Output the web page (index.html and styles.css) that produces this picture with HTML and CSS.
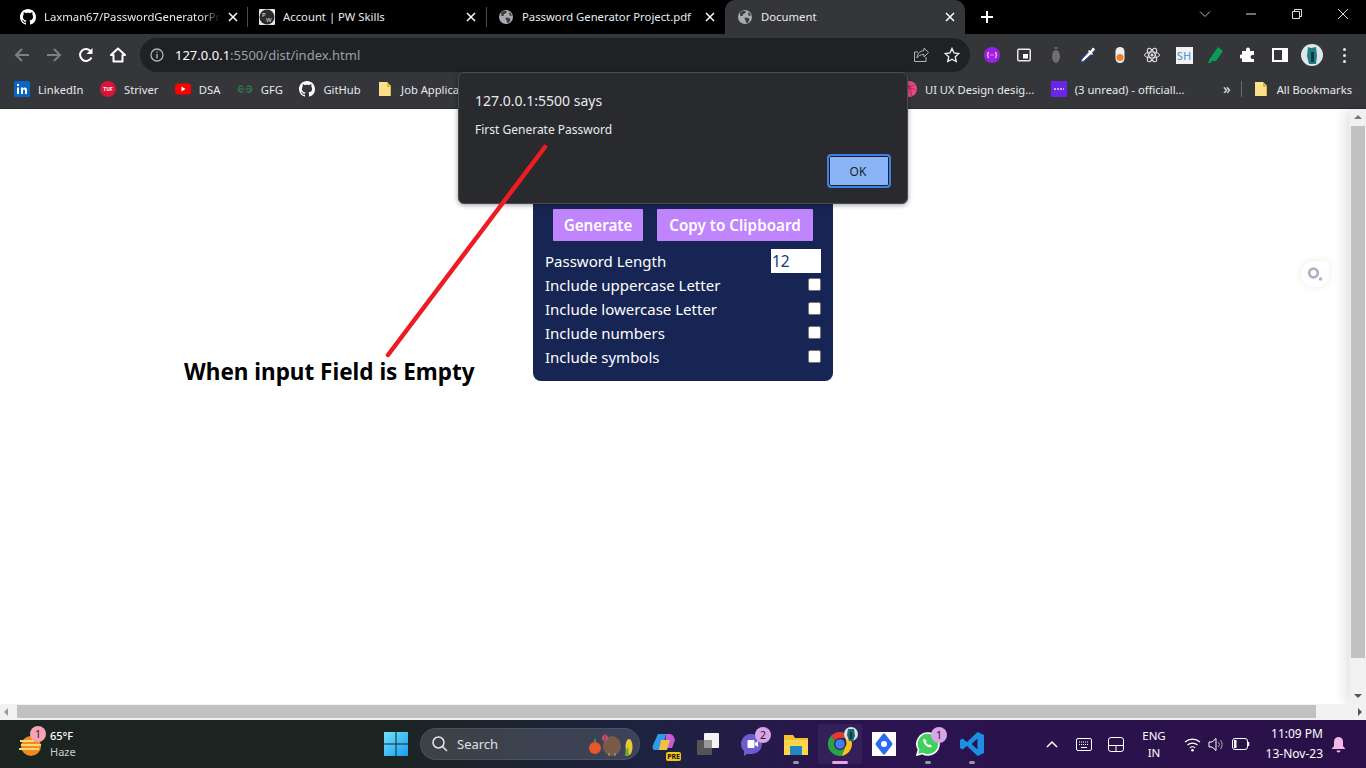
FILE: index.html
```html
<!DOCTYPE html>
<html lang="en">
<head>
    <meta charset="UTF-8">
    <meta name="viewport" content="width=device-width, initial-scale=1.0">
    <title>Document</title>
    <link rel="stylesheet" href="styles.css">
</head>
<body>
    <svg class="defs" width="0" height="0">
        <symbol id="gh" viewBox="0 0 16 16"><path fill="#fff" d="M8 0C3.58 0 0 3.58 0 8c0 3.54 2.29 6.53 5.47 7.59.4.07.55-.17.55-.38 0-.19-.01-.82-.01-1.49-2.01.37-2.53-.49-2.69-.94-.09-.23-.48-.94-.82-1.13-.28-.15-.68-.52-.01-.53.63-.01 1.08.58 1.23.82.72 1.21 1.87.87 2.33.66.07-.52.28-.87.51-1.07-1.78-.2-3.64-.89-3.64-3.95 0-.87.31-1.59.82-2.15-.08-.2-.36-1.02.08-2.12 0 0 .67-.21 2.2.82.64-.18 1.32-.27 2-.27.68 0 1.36.09 2 .27 1.53-1.04 2.2-.82 2.2-.82.44 1.1.16 1.92.08 2.12.51.56.82 1.27.82 2.15 0 3.07-1.87 3.75-3.65 3.95.29.25.54.73.54 1.48 0 1.07-.01 1.93-.01 2.2 0 .21.15.46.55.38A8.013 8.013 0 0016 8c0-4.42-3.58-8-8-8z"/></symbol>
        <symbol id="globe" viewBox="0 0 16 16"><circle cx="8" cy="8" r="7" fill="#a8abb0"/><path fill="#3a3b3f" d="M3 3.5l3-1.8 3 .6-1 2-2 .8-.4 2L3.400 7zM8 8.500l3.500.5 1 2-2 3-1.500-.5-.5-2.500-1-1zM11 3l2 1.500.8 2.500-2.300-.5z"/></symbol>
        <symbol id="folder" viewBox="0 0 12 16"><path fill="#fbe08c" d="M0 1h8l4 4v10H0z"/><path fill="#e3b341" d="M8 1l4 4v10h-1V6H8z"/></symbol>
        <symbol id="close" viewBox="0 0 10 10"><path d="M1 1l8 8M9 1l-8 8" stroke="#fff" stroke-width="1.500" fill="none"/></symbol>
    </svg>

    <div class="tabstrip">
        <div class="tab">
            <svg class="ico16"><use href="#gh"/></svg>
            <span class="tab-title fade">Laxman67/PasswordGeneratorPr</span>
            <svg class="tab-x"><use href="#close"/></svg>
        </div>
        <div class="tab sep">
            <svg class="ico16" viewBox="0 0 16 16"><rect width="16" height="16" rx="1" fill="#e8e8e8"/><circle cx="8" cy="8" r="7.500" fill="#2a2a2a"/><text x="3" y="8" class="fav-txt" fill="#e8e8e8">P</text><text x="7" y="13" class="fav-txt" fill="#e8e8e8">W</text></svg>
            <span class="tab-title">Account | PW Skills</span>
            <svg class="tab-x"><use href="#close"/></svg>
        </div>
        <div class="tab sep">
            <svg class="ico16"><use href="#globe"/></svg>
            <span class="tab-title">Password Generator Project.pdf</span>
            <svg class="tab-x"><use href="#close"/></svg>
        </div>
        <div class="tab active">
            <svg class="ico16"><use href="#globe"/></svg>
            <span class="tab-title">Document</span>
            <svg class="tab-x"><use href="#close"/></svg>
        </div>
        <svg class="newtab" viewBox="0 0 14 14"><path d="M7 1v12M1 7h12" stroke="#fff" stroke-width="2"/></svg>
        <div class="winctl">
            <svg viewBox="0 0 12 12"><path d="M1 3.500l5 5 5-5" stroke="#bbb" fill="none"/></svg>
            <svg viewBox="0 0 12 12"><path d="M1 6h10" stroke="#ddd"/></svg>
            <svg viewBox="0 0 12 12"><path d="M1.500 3.500h7v7h-7zM3.500 3.500v-2h7v7h-2" stroke="#ddd" fill="none"/></svg>
            <svg viewBox="0 0 12 12"><path d="M1 1l10 10M11 1L1 11" stroke="#ddd" fill="none"/></svg>
        </div>
    </div>

    <div class="toolbar">
        <div class="slot"><svg class="ico16" viewBox="0 0 16 16"><path d="M15 8H2M8 2L2 8l6 6" stroke="#7d7f83" stroke-width="2" fill="none"/></svg></div>
        <div class="slot"><svg class="ico16" viewBox="0 0 16 16"><path d="M1 8h13M8 2l6 6-6 6" stroke="#7d7f83" stroke-width="2" fill="none"/></svg></div>
        <div class="slot"><svg class="ico16" viewBox="0 0 16 16"><path d="M13.500 10.500A6 6 0 1 1 13 4.500" stroke="#fff" stroke-width="2" fill="none"/><path d="M14.500 1v6h-6z" fill="#fff"/></svg></div>
        <div class="slot"><svg class="ico16" viewBox="0 0 16 16"><path d="M8 1.500L1 8h2.500v6.500h9V8H15z" stroke="#fff" stroke-width="2" fill="none" stroke-linejoin="round"/></svg></div>
        <div class="omnibox">
            <svg class="info" viewBox="0 0 14 14"><circle cx="7" cy="7" r="6" stroke="#b0b3b8" stroke-width="1.300" fill="none"/><path d="M7 6v4.500M7 3.500v1.300" stroke="#b0b3b8" stroke-width="1.400"/></svg>
            <span class="url"><b>127.0.0.1</b>:5500/dist/index.html</span>
            <svg class="omni-ico" viewBox="0 0 16 16"><path d="M11 1l4.500 4.500L11 10V7.500C7 7.500 5 9 4 11c0-4 2.500-7 7-7.500zM13 10v4.500H1.500V5H5" stroke="#b0b3b8" fill="none"/></svg>
            <svg class="omni-ico" viewBox="0 0 16 16"><path d="M8 1.500l2 4.400 4.800.6-3.500 3.300.9 4.700L8 12.200l-4.200 2.300.9-4.700L1.200 6.500 6 5.900z" stroke="#e8eaed" stroke-width="1.400" fill="none"/></svg>
        </div>
        <div class="extensions">
            <div class="slot"><svg class="ico16" viewBox="0 0 16 16"><circle cx="8" cy="8" r="8" fill="#a020e0"/><path d="M4.500 5c-1 2-1 4 0 6M11.500 5c1 2 1 4 0 6M6.500 8h1M8.500 8h1" stroke="#fff" fill="none"/></svg></div>
            <div class="slot"><svg class="ico16" viewBox="0 0 16 16"><rect x="1" y="1.500" width="14" height="13" rx="2" fill="#e8e8e8"/><rect x="2.500" y="3" width="11" height="10" fill="#333"/><rect x="7" y="7" width="5" height="4.500" fill="#fff"/></svg></div>
            <div class="slot"><svg class="ico16" viewBox="0 0 16 16"><path d="M6.500 0h3v2h-3z" fill="#666"/><ellipse cx="8" cy="9.500" rx="4" ry="6.500" fill="#6f6f6f"/></svg></div>
            <div class="slot"><svg class="ico16" viewBox="0 0 16 16"><path d="M9.500 4L2 12l-1 3 3-1 8-7.500z" fill="#fff" stroke="#3355cc"/><path d="M9 3l1.500 1L12.500.8c1-.7 3 1.300 2.200 2.300L12 5.500 13 7l-1 1-4-4z" fill="#fff"/></svg></div>
            <div class="slot"><svg class="ico16" viewBox="0 0 16 16"><rect x="3.500" y="0" width="9" height="16" rx="4.500" fill="#eee"/><circle cx="8" cy="10.500" r="3.500" fill="#f08030"/></svg></div>
            <div class="slot"><svg class="ico16" viewBox="0 0 16 16"><g stroke="#ddd" fill="none"><ellipse cx="8" cy="8" rx="7.500" ry="3"/><ellipse cx="8" cy="8" rx="7.500" ry="3" transform="rotate(60 8 8)"/><ellipse cx="8" cy="8" rx="7.500" ry="3" transform="rotate(120 8 8)"/></g><circle cx="8" cy="8" r="1.500" fill="#ddd"/></svg></div>
            <div class="slot"><span class="sh">SH</span></div>
            <div class="slot"><svg class="ico16" viewBox="0 0 16 16"><path d="M10 0l5 4-7 10H3.500L3 16H0l2-4.500z" fill="#0a9d58"/></svg></div>
            <div class="slot"><svg class="ico16" viewBox="0 0 16 16"><path d="M6 2.500a2 2 0 0 1 4 0V4h4v4h-1.500a2 2 0 0 0 0 4H14v3H2v-3.500h-.5a2 2 0 0 1 0-4H2V4h4z" fill="#fff"/></svg></div>
            <div class="slot"><svg class="ico16" viewBox="0 0 16 16"><path d="M1 2h14v12H1z" stroke="#fff" stroke-width="2" fill="none"/><path d="M10 2h5v12h-5z" fill="#fff"/></svg></div>
            <div class="slot"><svg class="avatar" viewBox="0 0 22 22"><circle cx="11" cy="11" r="11" fill="#dfe7ea"/><path d="M7 3l3 1 5-1 1 9-1 8H8l-2-8z" fill="#1f7f86"/><path d="M10 8h3v10h-3z" fill="#16363b"/></svg></div>
            <div class="slot"><span class="dots"><i></i><i></i><i></i></span></div>
        </div>
    </div>

    <div class="bookmarks">
        <div class="bm">
            <svg class="ico16" viewBox="0 0 16 16"><rect width="16" height="16" rx="1.500" fill="#0a66c2"/><path d="M3 6.500h2V13H3zM3 3h2v2H3zM7 6.500h2v1c.8-1.500 4-1.800 4 1.500v4h-2V9.500c0-1.500-2-1.500-2 0V13H7z" fill="#fff"/></svg>
            <span>LinkedIn</span>
        </div>
        <div class="bm">
            <svg class="ico16" viewBox="0 0 16 16"><circle cx="8" cy="8" r="8" fill="#d8143a"/><text x="8" y="10" class="tuf" fill="#fff" text-anchor="middle">TUF</text></svg>
            <span>Striver</span>
        </div>
        <div class="bm">
            <svg class="ico16" viewBox="0 0 16 16"><rect y="2.500" width="16" height="11" rx="3" fill="#f00"/><path d="M6.500 5.500l4 2.500-4 2.500z" fill="#fff"/></svg>
            <span>DSA</span>
        </div>
        <div class="bm">
            <svg class="ico16" viewBox="0 0 16 16"><path d="M7.500 8H1.200a3 3 0 0 0 5.300 2M1.500 6.500a3 3 0 0 1 4.500-.8M8.500 8h6.300a3 3 0 0 1-5.300 2M14.500 6.500a3 3 0 0 0-4.500-.8" stroke="#2f8d46" stroke-width="1.100" fill="none"/></svg>
            <span>GFG</span>
        </div>
        <div class="bm">
            <svg class="ico16"><use href="#gh"/></svg>
            <span>GitHub</span>
        </div>
        <div class="bm">
            <svg class="ico16"><use href="#folder"/></svg>
            <span>Job Applications</span>
        </div>
        <div class="bm-gap"></div>
        <div class="bm">
            <svg class="ico16" viewBox="0 0 16 16"><circle cx="8" cy="8" r="8" fill="#ea4c89"/><path d="M2 5c4 1 8 1 12-1M5 1c3 4 5 9 6 14M1 9c4-2 9-3 14 0" stroke="#b8245e" fill="none"/></svg>
            <span>UI UX Design desig...</span>
        </div>
        <div class="bm">
            <svg class="ico16" viewBox="0 0 16 16"><rect width="16" height="16" rx="1" fill="#6a25e8"/><path d="M3 8h10" stroke="#ddd" stroke-width="1.500" stroke-dasharray="2 1"/></svg>
            <span>(3 unread) - officiall...</span>
        </div>
        <span class="bm-more">»</span>
        <span class="bm-sep"></span>
        <div class="bm">
            <svg class="ico16"><use href="#folder"/></svg>
            <span>All Bookmarks</span>
        </div>
    </div>

    <div class="page">
        <div class="card">
            <div class="card-actions">
                <button class="btn btn-gen">Generate</button>
                <button class="btn btn-copy">Copy to Clipboard</button>
            </div>
            <div class="opt"><span>Password Length</span><span class="len">12</span></div>
            <div class="opt"><span>Include uppercase Letter</span><span class="check"></span></div>
            <div class="opt"><span>Include lowercase Letter</span><span class="check"></span></div>
            <div class="opt"><span>Include numbers</span><span class="check"></span></div>
            <div class="opt"><span>Include symbols</span><span class="check"></span></div>
        </div>

        <p class="note">When input Field is Empty</p>
        <div class="widget"><svg viewBox="0 0 16 16" width="16" height="16"><circle cx="6.500" cy="7" r="4.300" stroke="#aab4c6" stroke-width="2.800" fill="none"/><circle cx="13.500" cy="13" r="1.800" fill="#aab4c6"/></svg></div>

        <div class="vbar">
            <div class="arrow up"></div>
            <div class="vthumb"></div>
            <div class="arrow down"></div>
        </div>
        <div class="hbar">
            <div class="arrow left"></div>
            <div class="hthumb"></div>
            <div class="arrow right"></div>
        </div>
    </div>

    <div class="dialog">
        <div class="dialog-title">127.0.0.1:5500 says</div>
        <div class="dialog-msg">First Generate Password</div>
        <div class="dialog-foot"><button class="ok">OK</button></div>
    </div>
    <svg class="pen" width="1366" height="768"><path d="M545 147L388 355" stroke="#ed1c24" stroke-width="4.500" stroke-linecap="round"/></svg>

    <div class="taskbar">
        <div class="weather">
            <svg class="sun" viewBox="0 0 24 24"><circle cx="13" cy="14" r="10" fill="#f08a1d"/><path d="M2 9h14M3 13h20M1 17h20" stroke="#f6d77a" stroke-width="2"/></svg>
            <span class="badge pink">1</span>
            <div class="weather-txt"><b>65°F</b><span>Haze</span></div>
        </div>
        <div class="tb-slot">
            <svg class="ico24" viewBox="0 0 24 24"><path d="M0 0h11.500v11.500H0zM12.500 0H24v11.500H12.500zM0 12.500h11.500V24H0zM12.500 12.500H24V24H12.500z" fill="url(#winfill)"/><defs><linearGradient id="winfill" x1="0" y1="0" x2="1" y2="1"><stop offset="0" stop-color="#6fe3fb"/><stop offset="1" stop-color="#1a9af0"/></linearGradient></defs></svg>
        </div>
        <div class="search">
            <svg width="18" height="18" viewBox="0 0 18 18"><circle cx="7.500" cy="7.500" r="5.500" stroke="#e8e8e8" stroke-width="1.500" fill="none"/><path d="M11.500 11.500L16 16" stroke="#e8e8e8" stroke-width="1.500"/></svg>
            <span>Search</span>
            <svg class="turkey" width="46" height="28" viewBox="0 0 46 28"><circle cx="6" cy="18" r="6" fill="#e8562a"/><path d="M6 12V9" stroke="#4c8a2c" stroke-width="2"/><ellipse cx="23" cy="16" rx="9" ry="10" fill="#7a5a44"/><circle cx="16" cy="8" r="3" fill="#c8506a"/><path d="M16 4v10" stroke="#a04a5a" stroke-width="2"/><path d="M20 26v-3M26 26v-3" stroke="#c99" stroke-width="1"/><ellipse cx="40" cy="17" rx="3.500" ry="8" fill="#e9c832"/><path d="M36 26c0-5 1-7 3-9l1 9z" fill="#6aa832"/></svg>
        </div>
        <div class="tb-slot">
            <svg class="ico24" viewBox="0 0 24 24"><path d="M6 2h8l-4 16H3C1 18 0 16 1 13z" fill="#2f9ae8"/><path d="M14 2h4c2 0 4 2 5 6l-3 8h-7z" fill="#c45cd8"/><path d="M9 8h9l-3 10H7z" fill="#f0c040"/></svg>
            <span class="pre">PRE</span>
        </div>
        <div class="tb-slot">
            <svg class="ico24" viewBox="0 0 24 24"><rect x="1" y="8" width="15" height="15" rx="1" fill="#555"/><rect x="8" y="1" width="15" height="15" rx="1" fill="#f4f4f4"/><rect x="8" y="8" width="8" height="8" fill="#999"/></svg>
        </div>
        <div class="tb-slot">
            <svg class="ico24" viewBox="0 0 24 24"><path d="M12 2a10 10 0 0 1 0 20H7l-3 2v-5A10 10 0 0 1 12 2z" fill="#6d5ccf"/><rect x="7.500" y="8" width="7" height="8" rx="1" fill="#fff"/><path d="M15 11l3-2v6l-3-2z" fill="#fff"/></svg>
            <span class="badge lilac">2</span>
        </div>
        <div class="tb-slot dot">
            <svg class="ico24" viewBox="0 0 24 24"><path d="M0 3h9l2 3h13v17H0z" fill="#f4c22e"/><path d="M0 8h24v15H0z" fill="#fbd54a"/><rect x="6" y="14" width="12" height="9" rx="1" fill="#1f86c8"/></svg>
        </div>
        <div class="tb-slot current">
            <svg class="ico24" viewBox="0 0 24 24"><path d="M12 0a12 12 0 0 1 10.400 6H12a6 6 0 0 0-5.200 3L3.300 3.600A12 12 0 0 1 12 0z" fill="#e23c30"/><path d="M22.400 6a12 12 0 0 1-9 17.900l3.800-8.900A6 6 0 0 0 18 9c0-1-.2-2.100-.8-3z" fill="#fbc116"/><path d="M3.300 3.600A12 12 0 0 0 13.400 23.900l3.800-8.900a6 6 0 0 1-10.400-6z" fill="#2aa24a"/><circle cx="12" cy="12" r="4.800" fill="#3f7fe8"/></svg>
            <svg class="chrome-avatar" viewBox="0 0 14 14"><circle cx="7" cy="7" r="7" fill="#d8e4e6"/><path d="M4 2h6l1 7-2 5H5L3 8z" fill="#176c74"/><path d="M6 5h2v7H6z" fill="#143033"/></svg>
        </div>
        <div class="tb-slot">
            <svg class="ico24" viewBox="0 0 24 24"><rect width="24" height="24" fill="#fff"/><path d="M12 3l7 9-7 9-7-9z" fill="#2a6df0" stroke="#2a6df0" stroke-width="3" stroke-linejoin="round"/><circle cx="12" cy="12" r="3" fill="#fff"/></svg>
        </div>
        <div class="tb-slot dot">
            <svg class="ico24" viewBox="0 0 24 24"><path d="M12 1a11 11 0 0 1 0 22c-2 0-4-.5-5.600-1.500L1 23l1.500-5.300A11 11 0 0 1 12 1z" fill="#3fd05e" stroke="#fff" stroke-width="1.600"/><path d="M8 6.500c-1.500 1.500-1 4 1.500 6.500s5 3 6.500 1.500l-2-2.200-1.500.7c-1-.5-2-1.500-2.500-2.500l.7-1.500z" fill="#fff"/></svg>
            <span class="badge lilac">1</span>
        </div>
        <div class="tb-slot dot">
            <svg class="ico24" viewBox="0 0 24 24"><path d="M17.500 0L24 3v18l-6.500 3L7 14l-4.500 3.500L0 16V8l2.500-1.500L7 10zM17.500 6.500L11.500 12l6 5.500z" fill="#1a8fe3"/></svg>
        </div>

        <div class="tray">
            <div class="tray-slot"><svg width="12" height="8" viewBox="0 0 12 8"><path d="M1 7l5-5 5 5" stroke="#fff" stroke-width="1.500" fill="none"/></svg></div>
            <div class="tray-slot"><svg width="16" height="13" viewBox="0 0 16 13"><rect x=".5" y=".5" width="15" height="12" rx="1.500" stroke="#fff" fill="none"/><path d="M3 4h10M3 6.500h10" stroke="#fff" stroke-dasharray="1 1"/><path d="M5 9.500h6" stroke="#fff"/></svg></div>
            <div class="tray-slot"><svg width="16" height="15" viewBox="0 0 16 15"><rect x=".5" y=".5" width="15" height="14" rx="2.500" stroke="#fff" fill="none"/><path d="M.5 8.500h15M8 8.500v6" stroke="#fff"/></svg></div>
            <div class="lang"><span>ENG</span><span>IN</span></div>
            <svg class="net" width="17" height="15" viewBox="0 0 17 15"><path d="M1 5a11 11 0 0 1 15 0M3.500 8a7.500 7.500 0 0 1 10 0M6 10.800a3.500 3.500 0 0 1 5 0" stroke="#fff" stroke-width="1.200" fill="none"/><circle cx="8.500" cy="13.300" r="1.300" fill="#fff"/></svg>
            <svg class="vol" width="16" height="15" viewBox="0 0 16 15"><path d="M1 5h3l4-3.500v12L4 10H1z" stroke="#fff" fill="none"/><path d="M10.500 5a4 4 0 0 1 0 5M12.500 3a7 7 0 0 1 0 9" stroke="#aaa" fill="none"/></svg>
            <svg class="batt" width="18" height="12" viewBox="0 0 18 12"><rect x=".5" y=".5" width="15" height="11" rx="2.500" stroke="#fff" fill="none"/><rect x="2" y="2" width="2.500" height="8" fill="#fff"/><path d="M16.500 4v4" stroke="#fff" stroke-width="1.500"/></svg>
            <div class="clock"><span>11:09 PM</span><span>13-Nov-23</span></div>
            <svg class="bell" width="15" height="17" viewBox="0 0 15 17"><path d="M7.500 1a4.500 4.500 0 0 1 4.500 4.500V10l2.500 3H.5L3 10V5.500A4.500 4.500 0 0 1 7.500 1z" fill="#f3b6e6"/><path d="M5.500 14.500h4a2 2 0 0 1-4 0z" fill="#f3b6e6"/></svg>
        </div>
    </div>
</body>
</html>
```

FILE: styles.css
```css
* {
    box-sizing: border-box;
}

body {
    position: relative;
    width: 1366px;
    height: 768px;
    margin: 0;
    overflow: hidden;
    font-family: "Noto Sans", "Open Sans", Arial, sans-serif;
    display: flex;
    flex-direction: column;
    background: #fff;
}

.defs {
    position: absolute;
}

.ico16 {
    width: 16px;
    height: 16px;
    flex: none;
}

.ico24 {
    width: 24px;
    height: 24px;
}

.fav-txt {
    font-size: 6px;
}

.tuf {
    font-size: 5px;
    font-weight: 700;
}

/* tab strip */
.tabstrip {
    height: 34px;
    background: #000;
    display: flex;
    align-items: stretch;
    padding-left: 8px;
    flex: none;
}

.tab {
    position: relative;
    width: 239px;
    display: flex;
    align-items: center;
    padding: 0 10px 1px 12px;
    gap: 8px;
    color: #e8eaed;
    font-size: 11.300px;
}

.tab.sep::before {
    content: "";
    position: absolute;
    left: 0;
    top: 7px;
    bottom: 7px;
    width: 1px;
    background: #4a4c50;
}

.tab.active {
    width: 240px;
    background: #35363a;
    border-radius: 10px 10px 0 0;
}

.tab-title {
    flex: 1;
    white-space: nowrap;
}

.tab-title.fade {
    -webkit-mask-image: linear-gradient(90deg, #000 90%, transparent);
    mask-image: linear-gradient(90deg, #000 90%, transparent);
}

.tab-x {
    width: 10px;
    height: 10px;
    flex: none;
}

.newtab {
    width: 14px;
    height: 14px;
    margin: 10px 0 0 15px;
}

.winctl {
    margin-left: auto;
    display: flex;
    align-items: flex-start;
    padding-top: 8px;
}

.winctl svg {
    width: 12px;
    height: 12px;
    margin-right: 34px;
}

.winctl svg:last-child {
    margin-right: 17px;
}

/* toolbar */
.toolbar {
    height: 41px;
    background: #35363a;
    display: flex;
    align-items: flex-start;
    padding: 4px 0 0 6px;
    flex: none;
}

.slot {
    width: 32px;
    height: 34px;
    display: flex;
    align-items: center;
    justify-content: center;
    flex: none;
}

.omnibox {
    width: 830px;
    height: 34px;
    margin: 0 6px;
    border-radius: 17px;
    background: #202124;
    display: flex;
    align-items: center;
    padding: 0 10px 0 10px;
    font-size: 13px;
    color: #9aa0a6;
}

.info {
    width: 14px;
    height: 14px;
    flex: none;
}

.url {
    margin-left: 11px;
    flex: 1;
    white-space: nowrap;
}

.url b {
    font-weight: 400;
    color: #fff;
}

.omni-ico {
    width: 16px;
    height: 16px;
    margin-left: 15px;
}

.extensions {
    display: flex;
}

.sh {
    width: 17px;
    height: 17px;
    background: #f2f2f2;
    color: #5b9bd5;
    font-size: 11px;
    line-height: 17px;
    font-weight: 500;
    text-align: center;
}

.avatar {
    width: 22px;
    height: 22px;
}

.dots {
    display: flex;
    flex-direction: column;
    gap: 3px;
}

.dots i {
    width: 3px;
    height: 3px;
    border-radius: 50%;
    background: #e8eaed;
}

/* bookmarks */
.bookmarks {
    height: 34px;
    background: #35363a;
    border-bottom: 1px solid #2a2b2e;
    display: flex;
    align-items: center;
    padding: 0 14px 5px 14px;
    color: #e8eaed;
    font-size: 11.200px;
    flex: none;
}

.bm {
    display: flex;
    align-items: center;
    gap: 8px;
    margin-right: 16.500px;
    white-space: nowrap;
}

.bm:last-child {
    margin-right: 0;
}

.bm-gap {
    flex: 1;
}

.bm-more {
    font-size: 15px;
    margin: 0 10px 2px 22px;
}

.bm-sep {
    width: 1px;
    height: 16px;
    background: #6b6c70;
    margin-right: 11px;
}

/* page under the dialog */
.page {
    position: relative;
    height: 611px;
    flex: none;
    background: #fff;
}

.card {
    width: 300px;
    margin: 60px auto 0;
    padding: 40px 12px 12px;
    background: #172554;
    border-radius: 0 0 8px 8px;
    color: #fff;
    font-size: 15px;
}

.card-actions {
    display: flex;
    justify-content: center;
    gap: 14px;
    margin-bottom: 8px;
}

.btn {
    height: 32px;
    padding: 0;
    border: 0;
    border-radius: 1px;
    background: #c084fc;
    color: #fff;
    font: 600 15.200px "Noto Sans", sans-serif;
}

.btn-gen {
    width: 90px;
}

.btn-copy {
    width: 156px;
}

.opt {
    height: 24px;
    display: flex;
    justify-content: space-between;
    align-items: center;
}

.len {
    width: 50px;
    height: 24px;
    padding-left: 1px;
    background: #fff;
    color: #0b3d7a;
    font-size: 15.500px;
    line-height: 24px;
}

.check {
    width: 13px;
    height: 13px;
    margin-bottom: 2px;
    background: #fff;
    border: 1px solid #777;
    border-radius: 2px;
}

.note {
    position: absolute;
    left: 184px;
    top: 247px;
    margin: 0;
    color: #000;
    font-size: 22.500px;
    font-weight: 700;
    line-height: 32px;
    white-space: nowrap;
}

.widget {
    position: absolute;
    right: 37px;
    top: 152px;
    width: 28px;
    height: 26px;
    display: flex;
    align-items: center;
    justify-content: center;
    background: #fff;
    border-radius: 13px 4px 13px 13px;
    box-shadow: 0 0 8px rgba(0, 0, 0, 0.08);
}

.vbar {
    position: absolute;
    right: 0;
    top: 0;
    width: 16px;
    height: 595px;
    padding: 0 2px;
    background: #f1f1f1;
    box-shadow: -4px 0 14px rgba(0, 0, 0, 0.13);
    display: flex;
    flex-direction: column;
}

.vthumb {
    height: 532px;
    margin: 0 -1px;
    background: #c1c1c1;
}

.hbar {
    position: absolute;
    left: 0;
    bottom: 0;
    width: 1366px;
    height: 16px;
    padding: 1px 0 2px;
    background: #f1f1f1;
    display: flex;
    align-items: center;
}

.hthumb {
    width: 1299px;
    height: 13px;
    background: #c1c1c1;
}

.arrow {
    flex: none;
    position: relative;
}

.arrow.up,
.arrow.down {
    height: 17px;
}

.arrow.down {
    margin-top: auto;
}

.arrow.left,
.arrow.right {
    width: 17px;
    height: 12px;
}

.arrow.right {
    margin-left: auto;
    width: 34px;
}

.arrow::after {
    content: "";
    position: absolute;
    border: 4px solid transparent;
}

.arrow.up::after {
    left: 2px;
    top: 2px;
    border-bottom-color: #777;
}

.arrow.down::after {
    left: 2px;
    bottom: 2px;
    border-top-color: #555;
}

.arrow.left::after {
    left: 0;
    top: 2px;
    border-right-color: #999;
}

.arrow.right::after {
    right: 0;
    top: 2px;
    border-left-color: #555;
}

/* alert */
.dialog {
    position: absolute;
    left: 458px;
    top: 72px;
    width: 450px;
    height: 132px;
    padding: 18px 16px 0;
    background: #292a2d;
    border: 1px solid #4a4c50;
    border-radius: 6px;
    box-shadow: 0 1px 5px rgba(0, 0, 0, 0.4);
    color: #e8eaed;
}

.dialog-title {
    font-size: 14px;
    line-height: 20px;
}

.dialog-msg {
    margin-top: 9px;
    font-size: 12px;
    line-height: 20px;
}

.dialog-foot {
    display: flex;
    justify-content: flex-end;
    margin-top: 14px;
}

.ok {
    width: 64px;
    height: 34px;
    padding: 0 2px 0 0;
    background: #8ab4f8;
    color: #202124;
    border: 2px solid #3f7de8;
    box-shadow: inset 0 0 0 1px #202124;
    border-radius: 4px;
    font: 12px "Noto Sans", sans-serif;
}

.pen {
    position: absolute;
    left: 0;
    top: 0;
    pointer-events: none;
}

/* taskbar */
.taskbar {
    height: 48px;
    flex: none;
    display: flex;
    align-items: center;
    color: #fff;
    background: linear-gradient(90deg, #1c2422 0%, #1c2422 28%, #1d2340 47%, #2b1450 62%, #2a1048 100%);
}

.weather {
    position: relative;
    width: 374px;
    height: 48px;
    display: flex;
    align-items: center;
    padding-left: 18px;
    flex: none;
}

.sun {
    width: 24px;
    height: 24px;
}

.weather .badge {
    left: 30px;
    top: 6px;
}

.weather-txt {
    display: flex;
    flex-direction: column;
    margin-left: 8px;
    font-size: 11px;
    line-height: 16px;
}

.weather-txt b {
    font-weight: 500;
}

.weather-txt span {
    color: #ccc;
}

.badge {
    position: absolute;
    width: 16px;
    height: 16px;
    border-radius: 50%;
    color: #222;
    font-size: 10.500px;
    line-height: 16px;
    text-align: center;
}

.badge.pink {
    background: #f5a3b5;
}

.badge.lilac {
    background: #d8a5e8;
    right: 3px;
    top: 3px;
}

.tb-slot {
    position: relative;
    width: 44px;
    height: 40px;
    display: flex;
    align-items: center;
    justify-content: center;
    flex: none;
}

.tb-slot.dot::after,
.tb-slot.current::after {
    content: "";
    position: absolute;
    bottom: 0;
    left: 19px;
    width: 6px;
    height: 3px;
    border-radius: 2px;
    background: #9b95a8;
}

.tb-slot.current {
    background: rgba(255, 255, 255, 0.05);
    border-radius: 4px;
}

.tb-slot.current::after {
    left: 14px;
    width: 16px;
    background: #e8a5e8;
}

.chrome-avatar {
    position: absolute;
    right: 4px;
    top: 3px;
    width: 14px;
    height: 14px;
}

.pre {
    position: absolute;
    right: 5px;
    bottom: 3px;
    padding: 0 1px;
    background: #f5c518;
    border-radius: 2px;
    color: #111;
    font-size: 7px;
    font-weight: 700;
    line-height: 9px;
}

.search {
    width: 220px;
    height: 32px;
    margin: 0 2px;
    padding: 0 4px 0 10px;
    display: flex;
    align-items: center;
    gap: 8px;
    background: rgba(255, 255, 255, 0.14);
    border: 1px solid rgba(255, 255, 255, 0.08);
    border-radius: 16px;
    font-size: 13px;
    color: #e0e0e0;
    flex: none;
}

.turkey {
    margin-left: auto;
}

.tray {
    margin-left: 42px;
    display: flex;
    align-items: center;
}

.tray-slot {
    width: 32px;
    display: flex;
    justify-content: center;
}

.lang {
    width: 44px;
    display: flex;
    flex-direction: column;
    align-items: center;
    font-size: 11.500px;
    line-height: 17px;
}

.net {
    margin-left: 8px;
}

.vol {
    margin-left: 7px;
}

.batt {
    margin-left: 8px;
}

.clock {
    width: 73px;
    display: flex;
    flex-direction: column;
    align-items: flex-end;
    font-size: 12px;
    line-height: 20px;
}

.bell {
    margin-left: 8px;
}
```
